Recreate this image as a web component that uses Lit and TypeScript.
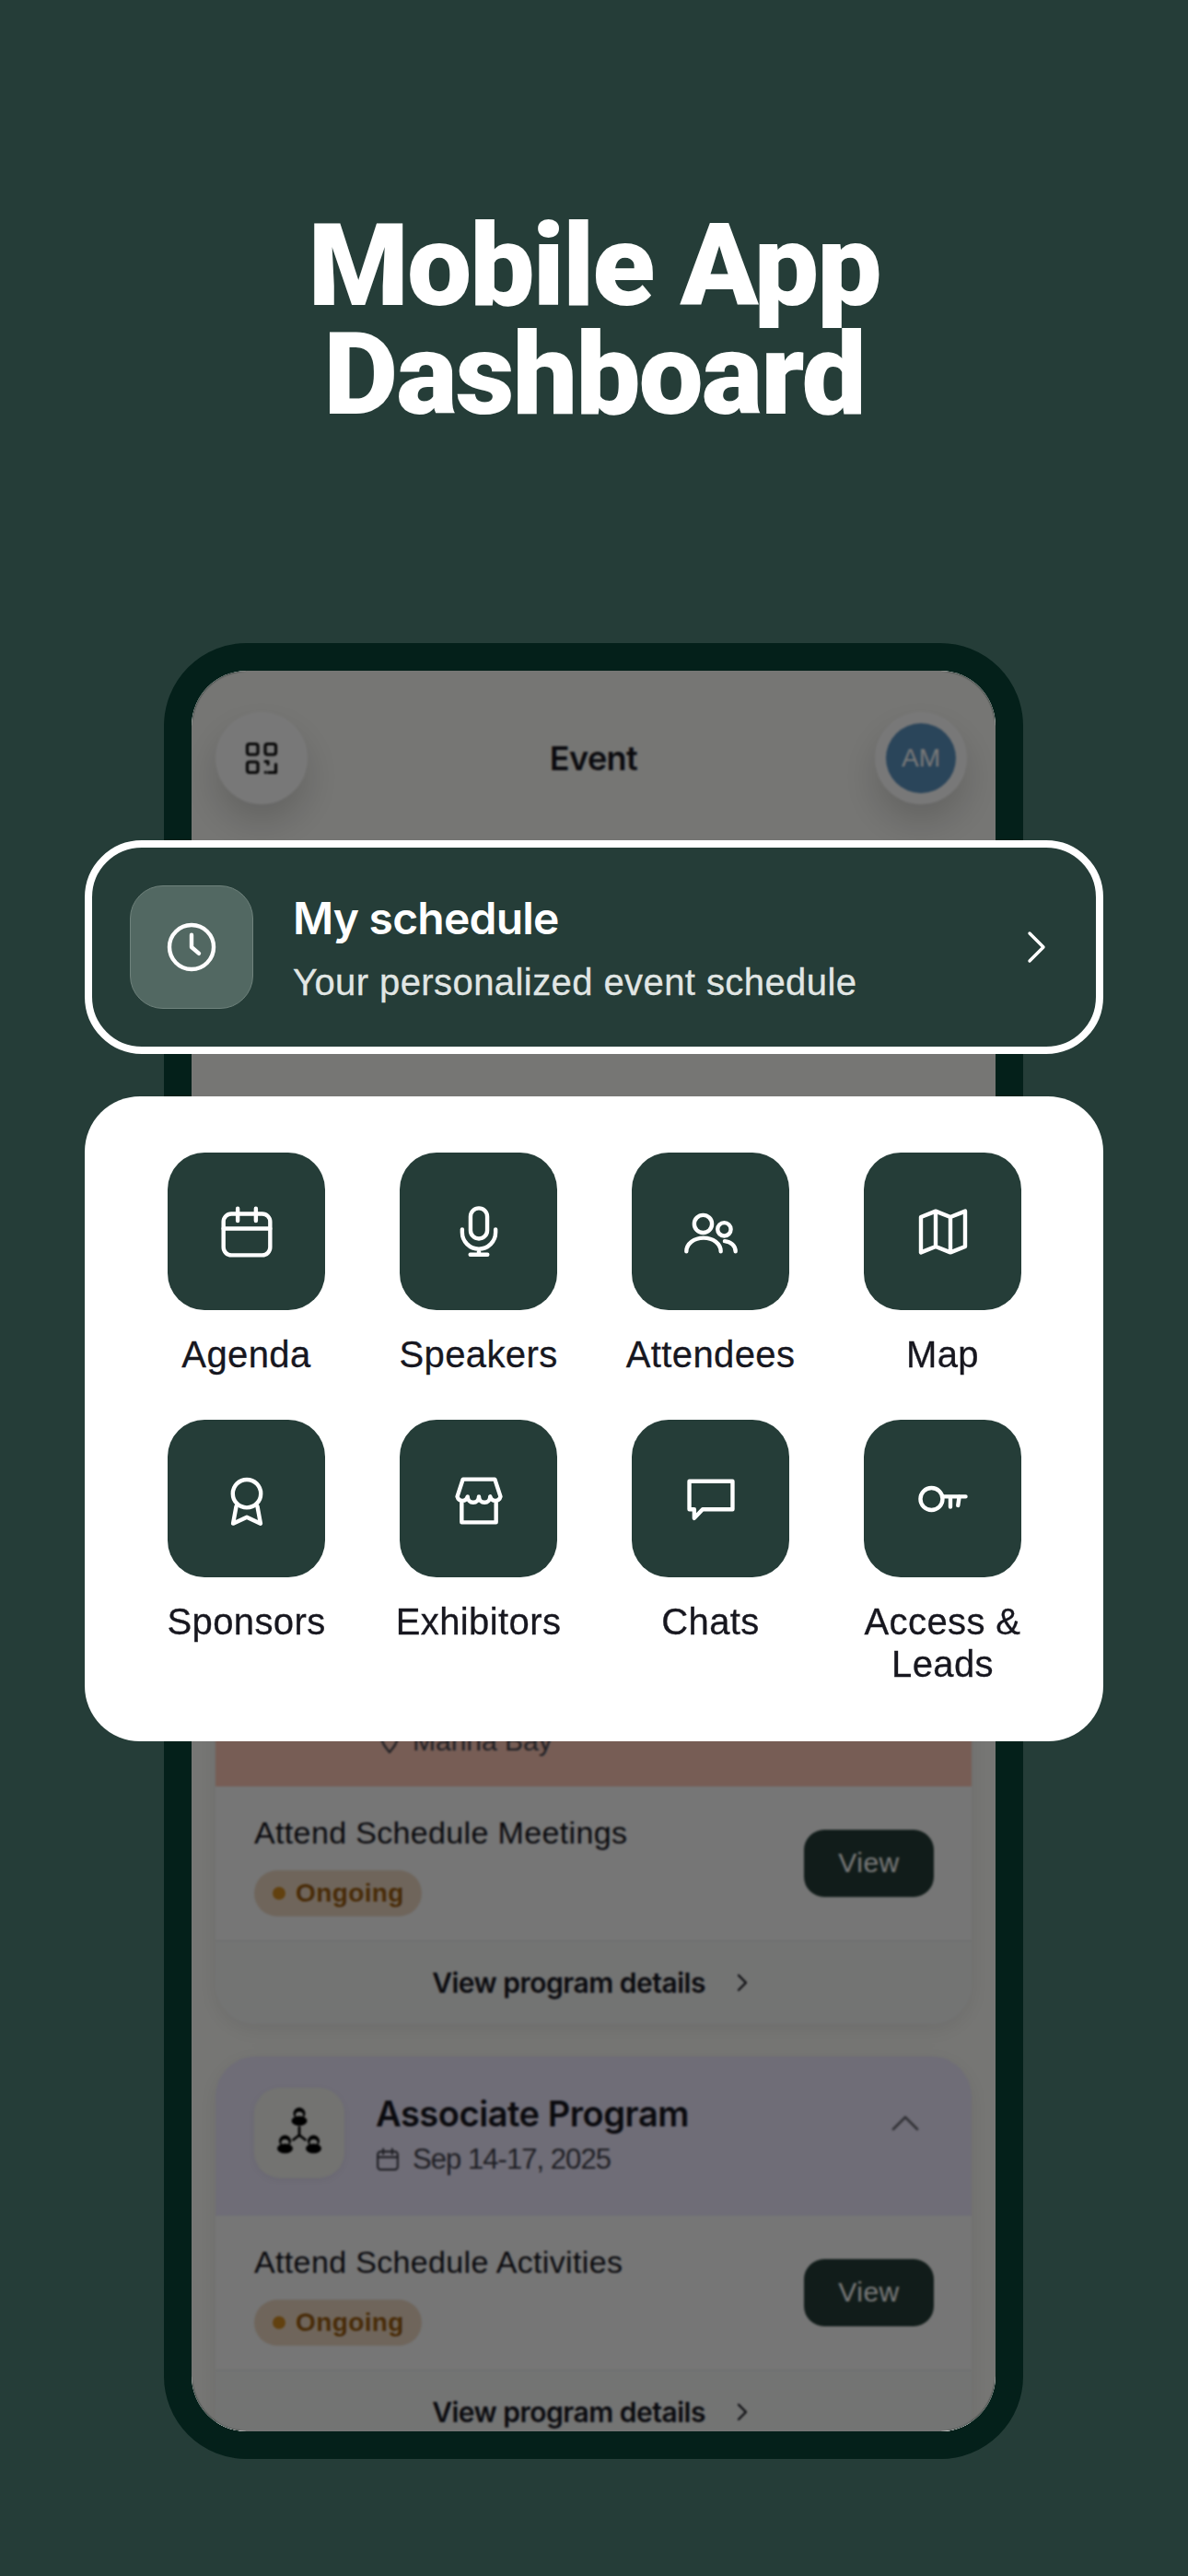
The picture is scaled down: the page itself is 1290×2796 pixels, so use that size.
import { LitElement, html, css, svg } from "lit";
import { customElement } from "lit/decorators.js";

const ic = (body: unknown, cls = "ic") => html`<svg class=${cls} viewBox="0 0 24 24" fill="none" stroke="currentColor" stroke-width="1.65" stroke-linecap="round" stroke-linejoin="round">${body}</svg>`;

const tiles: { label: string; icon: unknown }[] = [
  { label: "Agenda", icon: svg`<rect x="2.5" y="4.7" width="19" height="16.8" rx="3.2"/><path d="M2.5 10.7h19M8.3 2.5v5M15.7 2.5v5"/>` },
  { label: "Speakers", icon: svg`<rect x="8.6" y="2.4" width="6.8" height="12.4" rx="3.4"/><path d="M5.2 11v1.2a6.8 6.8 0 0 0 13.6 0V11M12 19v2.3M8.5 21.3h7"/>` },
  { label: "Attendees", icon: svg`<circle cx="8.8" cy="8.8" r="3.6"/><circle cx="17.4" cy="11" r="2.7"/><path d="M2 20c0-3.2 3.2-5.5 7-5.5s7 2.3 7 5.5M17.6 15.8c2.5.2 4.4 1.9 4.4 4.2"/>` },
  { label: "Map", icon: svg`<path d="M3 6l6-2.4L15 6l6-2.4v14.4L15 20.4 9 18l-6 2.4zM9 3.6V18M15 6v14.4"/>` },
  { label: "Sponsors", icon: svg`<circle cx="12" cy="9.8" r="5.7"/><path d="M7.7 15l-1.3 7 5.6-2.6 5.6 2.6-1.3-7"/>` },
  { label: "Exhibitors", icon: svg`<path d="M5.5 4h13l2.3 7a2.2 2.4 0 0 1-4.2 0 2.3 2.4 0 0 1-4.6 0 2.3 2.4 0 0 1-4.6 0 2.2 2.4 0 0 1-4.2 0zM5 13.6v7.9h14v-7.9"/>` },
  { label: "Chats", icon: svg`<path d="M3.2 4.8h17.6v11.4H8.6L5.2 19.8v-3.6h-2z"/>` },
  { label: "Access & Leads", icon: svg`<circle cx="7.3" cy="12" r="4.5"/><path d="M11.8 11h9.4M15 11v4.2M18.6 11l-.5 3.6"/>` },
];

const chevron = html`<svg class="chev-s" viewBox="0 0 12 20" fill="none" stroke="currentColor" stroke-width="2.2" stroke-linecap="round" stroke-linejoin="round"><path d="M2 2l8 8-8 8"/></svg>`;

const row = (text: string) => html`
  <div class="row">
    <div class="row-main">
      <div class="row-title">${text}</div>
      <div class="badge"><i class="dot"></i>Ongoing</div>
    </div>
    <div class="view">View</div>
  </div>
  <div class="foot"><span>View program details</span>${chevron}</div>`;

@customElement("app-root")
export class AppRoot extends LitElement {
  static styles = css`
    :host { display: block; width: 1290px; height: 2796px; background: #253d38; overflow: hidden; font-family: "Liberation Sans", Arial, sans-serif; }
    .page { display: flex; flex-direction: column; align-items: center; }
    h1 { margin: 0; padding-top: 230px; height: 698px; box-sizing: border-box; color: #fff; text-align: center; font: 900 125px/118px Roboto, sans-serif; letter-spacing: -2px; }
    .phone { position: relative; width: 933px; height: 1971px; margin-right: 1px; box-sizing: border-box; border: 30px solid #04201a; border-radius: 90px; background: #04201a; }
    .screen { position: relative; height: 100%; border-radius: 60px; overflow: hidden; background: #fbfbf7; }
    .dim { position: absolute; inset: 0; background: rgba(0,0,0,.53); backdrop-filter: blur(1px); }
    .top { display: flex; justify-content: space-between; align-items: center; padding: 45px 31px 0 26px; position: relative; }
    .round { width: 100px; height: 100px; border-radius: 50%; background: #fff; display: flex; align-items: center; justify-content: center; box-shadow: 0 20px 40px rgba(0,0,0,.16); color: #111; }
    .qr { width: 40px; height: 40px; }
    .top-title { position: absolute; left: 0; right: 0; text-align: center; font: 600 36px/44px Inter, sans-serif; letter-spacing: -.6px; color: #17171f; margin-top: 0; }
    .avatar { width: 76px; height: 76px; border-radius: 50%; background: #5a92bf; color: #fff; display: flex; align-items: center; justify-content: center; font-size: 28px; }
    .cards { display: flex; flex-direction: column; gap: 35px; margin: 0 26px; padding-top: 927px; }
    .card { background: #fafafa; border-radius: 44px; overflow: hidden; box-shadow: 0 6px 24px rgba(0,0,0,.08); }
    .head { height: 173px; box-sizing: border-box; display: flex; align-items: flex-start; padding: 34px 44px 0 42px; background: #ebe7fc; }
    .head.salmon { background: #fcc6b5; height: 139px; padding: 72px 0 0 176px; color: #45454f; font-size: 30px; line-height: 36px; align-items: flex-start; gap: 12px; }
    .pin { width: 26px; height: 36px; }
    .logo { width: 98px; height: 98px; border-radius: 28px; background: #f4f4f0; flex: none; display: flex; align-items: center; justify-content: center; box-shadow: 0 2px 8px rgba(0,0,0,.05); }
    .logo svg { width: 60px; height: 60px; }
    .info { margin-left: 34px; flex: 1; }
    .name { font: 600 38px/46px Inter, sans-serif; letter-spacing: -.45px; color: #17171f; margin-top: 5px; }
    .date { display: flex; align-items: center; gap: 14px; color: #45454f; font-size: 31px; line-height: 38px; margin-top: 8px; letter-spacing: -.95px; }
    .cal { width: 26px; height: 26px; }
    .up { width: 56px; height: 56px; margin-top: 10px; color: #6a6a75; flex: none; }
    .row { height: 167px; box-sizing: border-box; display: flex; justify-content: space-between; align-items: center; padding: 0 41px 0 42px; background: #fafafa; }
    .row-main { padding-top: 28px; padding-bottom: 26px; }
    .row-title { font-size: 34px; line-height: 44px; color: #17171f; letter-spacing: .35px; }
    .badge { margin-top: 19px; height: 50px; width: 182px; box-sizing: border-box; border-radius: 25px; background: #ecd7c2; color: #9a5c10; font-size: 28px; font-weight: 700; display: flex; align-items: center; gap: 11px; padding-left: 20px; letter-spacing: .4px; }
    .dot { width: 14px; height: 14px; border-radius: 50%; background: #d08a20; }
    .view { width: 141px; height: 73px; margin-bottom: 1px; border-radius: 22px; background: #253d38; color: #fff; display: flex; align-items: center; justify-content: center; font-size: 30px; letter-spacing: .5px; }
    .foot { height: 91px; border-top: 1px solid #e6eae8; box-sizing: border-box; background: #f4f6f5; display: flex; align-items: center; justify-content: center; gap: 34px; padding-right: 8px; font: 600 30px/36px Inter, sans-serif; letter-spacing: -.5px; color: #17171f; }
    .chev-s { width: 12px; height: 20px; }

    .schedule { position: absolute; left: -116px; top: 184px; width: 1106px; height: 232px; box-sizing: border-box; border: 8px solid #fff; border-radius: 62px; background: #253d38; display: flex; align-items: center; color: #fff; padding: 0 52px 0 41px; }
    .clock { width: 134px; height: 134px; box-sizing: border-box; border-radius: 36px; background: #526862; border: 1.5px solid #6f827c; color: #fff; display: flex; align-items: center; justify-content: center; flex: none; }
    .clock svg { width: 64px; height: 64px; }
    .sch-text { margin-left: 43px; flex: 1; }
    .sch-title { font: 600 48px/56px Inter, sans-serif; letter-spacing: -.8px; }
    .sch-sub { font-size: 40px; line-height: 48px; margin-top: 17px; margin-bottom: -3px; color: #e1e6e4; letter-spacing: .42px; -webkit-text-stroke: .3px currentColor; }
    .chev-l { width: 24px; height: 36px; }

    .grid-card { position: absolute; left: -116px; top: 462px; width: 1106px; height: 700px; box-sizing: border-box; background: #fff; border-radius: 60px; padding: 61px 90px 0; display: grid; grid-template-columns: repeat(4, 171px); column-gap: 81px; grid-template-rows: 290px 1fr; }
    .tile { display: flex; flex-direction: column; align-items: center; }
    .tile-box { width: 171px; height: 171px; border-radius: 40px; background: #253d38; color: #fff; display: flex; align-items: center; justify-content: center; flex: none; }
    .ic { width: 64px; height: 64px; }
    .tile-label { margin: 25px -20px 0; text-align: center; font-size: 40px; line-height: 46px; color: #17171f; letter-spacing: .4px; -webkit-text-stroke: .3px currentColor; }
  `;

  render() {
    return html`
      <div class="page">
        <h1>Mobile App<br />Dashboard</h1>
        <div class="phone">
          <div class="screen">
            <div class="top">
              <div class="round">
                <svg class="qr" viewBox="0 0 40 40" fill="none" stroke="currentColor" stroke-width="3.2" stroke-linecap="round" stroke-linejoin="round">
                  <rect x="4.5" y="4.5" width="11.5" height="11.5" rx="2.5"/><rect x="24" y="4.5" width="11.5" height="11.5" rx="2.5"/><rect x="4.5" y="24" width="11.5" height="11.5" rx="2.5"/>
                  <path d="M24 23.5h3v3M35.5 26.5v9h-8M24.2 35.3h.1"/>
                </svg>
              </div>
              <div class="top-title">Event</div>
              <div class="round"><div class="avatar">AM</div></div>
            </div>
            <div class="cards">
              <div class="card">
                <div class="head salmon">
                  <svg class="pin" viewBox="0 0 26 36" fill="none" stroke="currentColor" stroke-width="2.2" stroke-linejoin="round"><path d="M13 30C8 24 4 19 4 13a9 9 0 0 1 18 0c0 6-4 11-9 17z"/></svg>
                  <span>Marina Bay</span>
                </div>
                ${row("Attend Schedule Meetings")}
              </div>
              <div class="card">
                <div class="head">
                  <div class="logo">
                    <svg viewBox="0 0 60 60">
                      <g id="p">
                        <circle cx="30" cy="9" r="6.5" fill="#000"/><ellipse cx="30" cy="10.5" rx="4" ry="3.6" fill="#f4f4f0"/><ellipse cx="30" cy="17" rx="8.5" ry="5.3" fill="#000"/>
                        <circle cx="14.5" cy="39" r="6.5" fill="#000"/><ellipse cx="14.5" cy="40.5" rx="4" ry="3.6" fill="#f4f4f0"/><ellipse cx="14.5" cy="47" rx="8.5" ry="5.3" fill="#000"/>
                        <circle cx="45.5" cy="39" r="6.5" fill="#000"/><ellipse cx="45.5" cy="40.5" rx="4" ry="3.6" fill="#f4f4f0"/><ellipse cx="45.5" cy="47" rx="8.5" ry="5.3" fill="#000"/>
                      </g>
                      <path d="M30 24v8.5M30 32.5l-6.5 5M30 32.5l6.5 5" stroke="#000" stroke-width="2.8" stroke-linecap="round" fill="none"/>
                    </svg>
                  </div>
                  <div class="info">
                    <div class="name">Associate Program</div>
                    <div class="date">
                      <svg class="cal" viewBox="0 0 24 24" fill="none" stroke="currentColor" stroke-width="2" stroke-linecap="round"><rect x="2" y="4" width="20" height="18" rx="3"/><path d="M2 9.5h20M7.5 1.5v5M16.5 1.5v5"/></svg>
                      <span>Sep 14-17, 2025</span>
                    </div>
                  </div>
                  <svg class="up" viewBox="0 0 56 56" fill="none" stroke="currentColor" stroke-width="2.8" stroke-linecap="round" stroke-linejoin="round"><path d="M15 35l13-13 13 13"/></svg>
                </div>
                ${row("Attend Schedule Activities")}
              </div>
            </div>
            <div class="dim"></div>
          </div>

          <div class="schedule">
            <div class="clock">${ic(svg`<circle cx="12" cy="12" r="9"/><path d="M12 7v5l3 2.6"/>`, "")}</div>
            <div class="sch-text">
              <div class="sch-title">My schedule</div>
              <div class="sch-sub">Your personalized event schedule</div>
            </div>
            <svg class="chev-l" viewBox="0 0 24 36" fill="none" stroke="currentColor" stroke-width="3.4" stroke-linecap="round" stroke-linejoin="round"><path d="M4 3l15 15L4 33"/></svg>
          </div>

          <div class="grid-card">
            ${tiles.map((t) => html`
              <div class="tile">
                <div class="tile-box">${ic(t.icon)}</div>
                <div class="tile-label">${t.label}</div>
              </div>`)}
          </div>
        </div>
      </div>`;
  }
}
